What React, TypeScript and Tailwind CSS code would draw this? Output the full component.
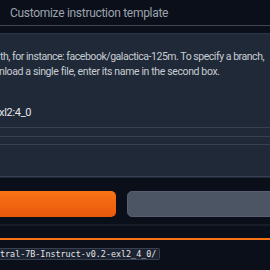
import React from "react";

export default function App() {
  return (
    <div className="w-[270px] h-[270px] bg-[#0b0f19] overflow-hidden relative" style={{ fontFamily: 'Roboto, "Noto Sans", sans-serif' }}>
      <div className="h-[25px] flex items-center pl-[10px] text-[12px] tracking-[-0.3px] text-[#9ca3af] whitespace-nowrap">
        Customize instruction template
      </div>
      <div className="h-px bg-[#404754]" />
      <div className="h-[7px]" />
      <div className="h-[145px] bg-[#1f2937] border-t border-[#2c3645] flex flex-col">
        <div className="pt-[15px] text-[10.5px] leading-[15px] text-[#c8cdd4] whitespace-nowrap">
          <div className="tracking-[-0.46px]">th, for instance: facebook/galactica-125m. To specify a branch,</div>
          <div className="-ml-[1px] tracking-[-0.37px]">nload a single file, enter its name in the second box.</div>
        </div>
        <div className="mt-[26px] text-[11px] leading-[15px] tracking-[-0.3px] text-[#e5e7eb] whitespace-nowrap -ml-[1px]">xl2:4_0</div>
        <div className="mt-[7px] h-px bg-[#374151]" />
        <div className="mt-[8px] h-px bg-[#374151]" />
        <div className="mt-[7px] h-px bg-[#374151]" />
        <div className="mt-[31px] h-px bg-[#374151]" />
      </div>
      <div className="flex mt-[13px] h-[26px] gap-[11px]">
        <div className="w-[126px] -ml-[10px] pl-[10px] shrink-0 rounded-[5px] bg-gradient-to-b from-[#f97316] to-[#ea580c]" />
        <div className="flex-1 -mr-[10px] rounded-[5px] bg-[#4b5563] border border-[#566070]" />
      </div>
      <div className="mt-[7px] h-[2px] bg-[#161c28]" />
      <div className="mt-[12px] h-[2px] bg-[#f97316]" />
      <div className="mt-[2px] inline-flex items-center h-[12px] pr-[3px] bg-[#1c2230] border border-[#374151] border-l-0 rounded-r-[2px] text-[8.4px] text-[#e5e7eb] whitespace-nowrap" style={{ fontFamily: '"DejaVu Sans Mono", monospace' }}>
        tral-7B-Instruct-v0.2-exl2_4_0/
      </div>
    </div>
  );
}
